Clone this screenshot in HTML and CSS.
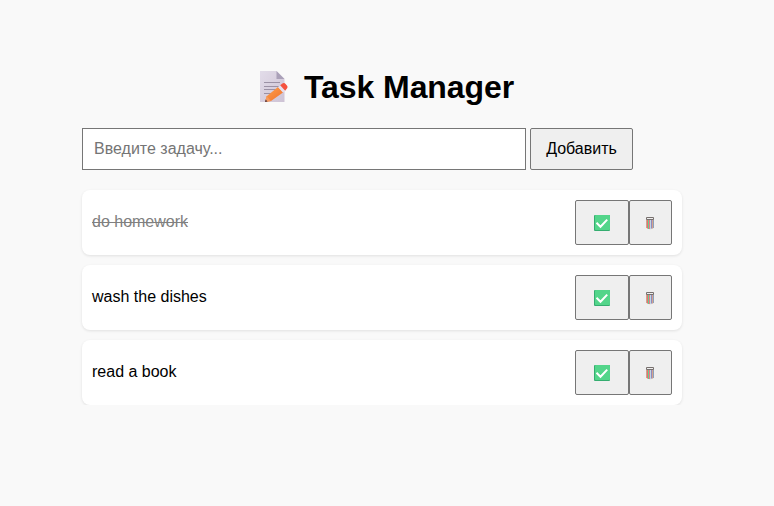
FILE: index.html
```html
<!DOCTYPE html>
<html lang="ru">
<head>
<meta charset="utf-8">
<title>Task Manager</title>
<link rel="stylesheet" href="styles.css">
</head>
<body>
<svg class="symbols" aria-hidden="true">
  <symbol id="check" viewBox="0 0 16 16">
    <rect width="16" height="16" rx="1" fill="#35ad70"/>
    <rect x="1" width="15" height="15" rx=".8" fill="#53d58a"/>
    <path d="M2.5 7.8l4 4L13.2 4.6" fill="none" stroke="#fff" stroke-width="2"/>
  </symbol>
  <symbol id="bin" viewBox="0 0 10 14">
    <path d="M1 3h8v9Q5 14.8 1 12z" fill="#dedbd9"/>
    <path d="M1.5 3.5v8.5" stroke="#c9a595"/>
    <path d="M2.5 4v8.5" stroke="#ee6f68"/>
    <path d="M3.5 4v9" stroke="#63cd90"/>
    <path d="M4.5 4v9" stroke="#ed7786"/>
    <path d="M5.5 4v9" stroke="#bfd7e4"/>
    <path d="M6.5 4v8.5" stroke="#9487ba"/>
    <path d="M7.5 4v8.5" stroke="#d3a58d"/>
    <path d="M8.5 3.5v8.5" stroke="#8da0bb"/>
    <rect x="1" y="1" width="8" height="3" rx="1" fill="#77706e"/>
    <rect x="2" y="2" width="6" height="1" fill="#eee"/>
  </symbol>
</svg>
<main class="container">
  <h1 class="title">
    <svg class="memo" viewBox="0 0 30 34" aria-hidden="true">
      <defs>
        <linearGradient id="paper" x2="1" y2="1"><stop stop-color="#e2dce9"/><stop offset="1" stop-color="#cec3d5"/></linearGradient>
        <linearGradient id="wood" x2="1" y2="1"><stop stop-color="#ffa24c"/><stop offset="1" stop-color="#ef702c"/></linearGradient>
      </defs>
      <path d="M0 1h16.5l8 8v23H0z" fill="url(#paper)"/>
      <path d="M16.5 1l8 8h-8z" fill="#aaa0b8"/>
      <path d="M4 12.5h16M4 16.5h16M4 19.5h12M4 23.5h8" stroke="#9b91a5"/>
      <path d="M5 32l1.7-5.8L18 17l5 5.5L11 31z" fill="url(#wood)"/>
      <path d="M5 32l1.7-5.8L11 31z" fill="#f79a5e"/>
      <path d="M5 32l.7-2.4 1.8 1.8z" fill="#4b3545"/>
      <path d="M18 17l2.2-1.8 5 5.6L23 22.5z" fill="#e8dfed"/>
      <path d="M20.2 15.2l2.6-1.9q1.6-.8 2.8.6l1.5 1.8q1 1.3 0 2.6l-1.9 2.5z" fill="#f5523f"/>
    </svg>
    <span>Task Manager</span>
  </h1>
  <form class="entry">
    <input class="field" type="text" placeholder="Введите задачу...">
    <button class="add" type="button">Добавить</button>
  </form>
  <ul class="tasks">
    <li class="task"><span class="done">do homework</span><div class="actions"><button class="complete" type="button"><svg class="check"><use href="#check"/></svg></button><button class="remove" type="button"><svg class="bin"><use href="#bin"/></svg></button></div></li>
    <li class="task"><span>wash the dishes</span><div class="actions"><button class="complete" type="button"><svg class="check"><use href="#check"/></svg></button><button class="remove" type="button"><svg class="bin"><use href="#bin"/></svg></button></div></li>
    <li class="task"><span>read a book</span><div class="actions"><button class="complete" type="button"><svg class="check"><use href="#check"/></svg></button><button class="remove" type="button"><svg class="bin"><use href="#bin"/></svg></button></div></li>
  </ul>
</main>
</body>
</html>
```
FILE: styles.css
```css
* { box-sizing: border-box; }
body {
  margin: 0;
  background: #f9f9f9;
  color: #000;
  font: 16px "Liberation Sans", Arial, sans-serif;
}
.symbols { display: none; }
.container { width: 600px; margin-left: 82px; padding-top: 68px; }
.title {
  display: flex;
  align-items: center;
  height: 38px;
  margin: 0 0 22px;
  padding-left: 178px;
  gap: 14px;
  font-size: 32px;
  line-height: 38px;
  letter-spacing: -.08px;
  white-space: nowrap;
}
.memo { width: 30px; height: 34px; flex: none; }
.entry { display: flex; gap: 4px; margin: 0 0 20px; }
.field {
  width: 444px;
  height: 42px;
  padding: 0 11px;
  border: 1px solid #767676;
  border-radius: 0;
  background: #fff;
  font: inherit;
}
.field::placeholder { color: #757575; }
button {
  display: flex;
  align-items: center;
  justify-content: center;
  padding: 0;
  border: 1px solid #767676;
  border-radius: 2px;
  background: #efefef;
  color: #000;
  font: inherit;
}
.add { width: 103px; height: 42px; }
.tasks {
  display: grid;
  gap: 10px;
  margin: 0;
  padding: 0;
  list-style: none;
}
.task {
  display: flex;
  align-items: center;
  justify-content: space-between;
  height: 65px;
  padding: 10px;
  border-radius: 8px;
  background: #fff;
  box-shadow: 0 1px 3px rgba(0, 0, 0, .1);
}
.task > span { padding-bottom: 2px; }
.task > .done { color: gray; text-decoration: line-through; }
.actions { display: flex; }
.complete { width: 54px; height: 45px; }
.remove { width: 43px; height: 45px; }
.check { width: 16px; height: 16px; }
.bin { width: 10px; height: 14px; margin: 1px 1px 0 0; }
```
